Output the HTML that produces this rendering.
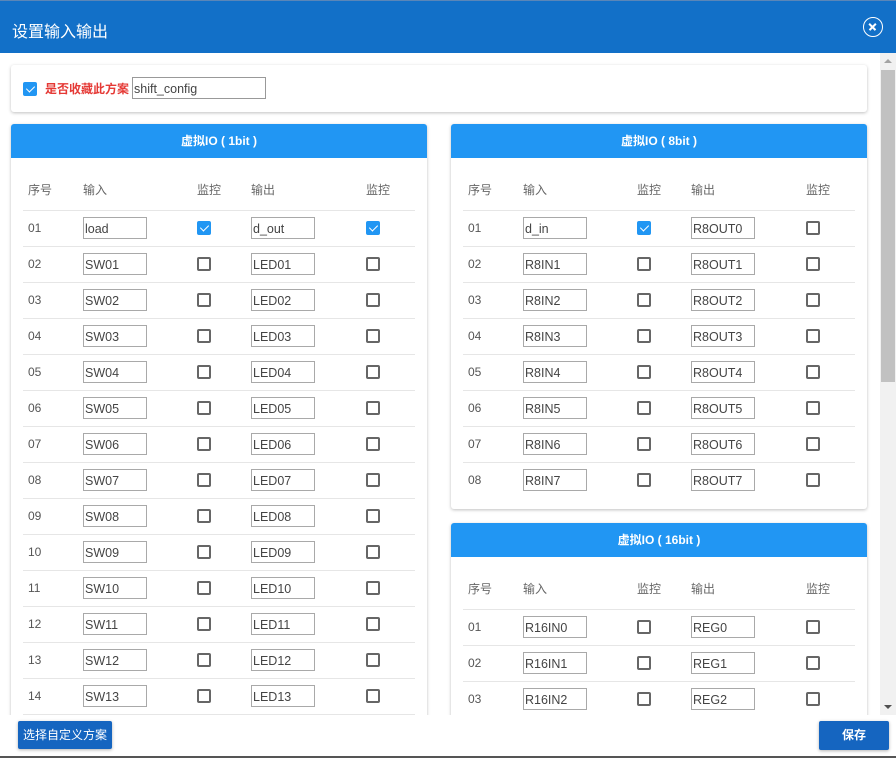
<!DOCTYPE html>
<html><head><meta charset="utf-8"><style>
*{box-sizing:border-box;margin:0;padding:0}
body{width:896px;height:758px;overflow:hidden;background:#fff;font-family:"Liberation Sans","Noto Sans CJK SC",sans-serif;position:relative;font-size:12px;color:#555}
.hd{position:absolute;left:0;top:0;width:896px;height:53px;background:#1270c8;border-top:1px solid #5a86b8}
.hd .t{position:absolute;left:12px;top:17px;color:#fff;font-size:16px}
.cl{position:absolute;left:863px;top:16px;width:20px;height:20px;border:1.5px solid #fff;border-radius:50%}
.cl:before,.cl:after{content:"";position:absolute;left:4px;top:8px;width:9px;height:1.5px;background:#fff;transform:rotate(45deg)}
.cl:after{transform:rotate(-45deg)}
.sb{position:absolute;left:880px;top:53px;width:16px;height:662px;background:#f1f1f1}
.sb .th{position:absolute;left:1px;top:17px;width:14px;height:312px;background:#c1c1c1}
.ar{position:absolute;left:4px;width:0;height:0;border-left:4px solid transparent;border-right:4px solid transparent}
.card{position:absolute;background:#fff;border-radius:3px;box-shadow:0 1px 3px rgba(0,0,0,.25)}
.cb{position:absolute;width:14px;height:14px;border:2px solid #666;border-radius:2px;background:#fff}
.cb.on{background:#2196f3;border-color:#2196f3}
.cb.on:after{content:"";position:absolute;left:3px;top:0px;width:4px;height:7px;border-right:1.5px solid #fff;border-bottom:1.5px solid #fff;transform:rotate(45deg)}
.inp{position:absolute;height:22px;width:64px;border:1px solid #a9a9a9;font-size:12.5px;color:#444;padding:4px 0 0 1px;font-family:"Liberation Sans","DejaVu Sans",sans-serif;white-space:nowrap;overflow:hidden}
.ph{position:absolute;left:0;top:0;width:416px;height:34px;background:#2196f3;color:#fff;font-weight:bold;font-size:12px;text-align:center;line-height:34px;border-radius:3px 3px 0 0}
.th2{position:absolute;top:57px;color:#666;font-size:12px}
.rows{position:absolute;left:12px;top:86px;width:392px}
.r{position:relative;height:36px;border-top:1px solid #e6e6e6}
.r .n{position:absolute;left:5px;top:10px;color:#555}
.r .i1{left:60px;top:6px}.r .i2{left:228px;top:6px}
.r .c1{left:174px;top:10px}.r .c2{left:343px;top:10px}
.btn{position:absolute;background:#1565c0;color:#fff;font-size:12px;border-radius:2px;text-align:center;box-shadow:0 1px 3px rgba(0,0,0,.3)}
</style></head><body>
<div class="hd"><div class="t">设置输入输出</div><div class="cl"></div></div>
<div class="sb"><div class="ar" style="top:6px;border-bottom:4px solid #a3a3a3"></div><div class="th"></div><div class="ar" style="top:652px;border-top:4px solid #505050"></div></div>

<div class="card" style="left:11px;top:65px;width:856px;height:47px">
<div class="cb on" style="left:12px;top:17px"></div>
<div style="position:absolute;left:34px;top:15px;color:#e53935;font-weight:bold;font-size:12px">是否收藏此方案</div>
<div class="inp" style="left:121px;top:12px;width:134px;border-color:#999">shift_config</div>
</div>

<div class="card" style="left:11px;top:124px;width:416px;height:620px">
<div class="ph">虚拟IO ( 1bit )</div>
<div class="th2" style="left:17px">序号</div><div class="th2" style="left:72px">输入</div><div class="th2" style="left:186px">监控</div><div class="th2" style="left:240px">输出</div><div class="th2" style="left:355px">监控</div>
<div class="rows">
<div class="r"><span class="n">01</span><div class="inp i1">load</div><div class="cb on c1"></div><div class="inp i2">d_out</div><div class="cb on c2"></div></div>
<div class="r"><span class="n">02</span><div class="inp i1">SW01</div><div class="cb c1"></div><div class="inp i2">LED01</div><div class="cb c2"></div></div>
<div class="r"><span class="n">03</span><div class="inp i1">SW02</div><div class="cb c1"></div><div class="inp i2">LED02</div><div class="cb c2"></div></div>
<div class="r"><span class="n">04</span><div class="inp i1">SW03</div><div class="cb c1"></div><div class="inp i2">LED03</div><div class="cb c2"></div></div>
<div class="r"><span class="n">05</span><div class="inp i1">SW04</div><div class="cb c1"></div><div class="inp i2">LED04</div><div class="cb c2"></div></div>
<div class="r"><span class="n">06</span><div class="inp i1">SW05</div><div class="cb c1"></div><div class="inp i2">LED05</div><div class="cb c2"></div></div>
<div class="r"><span class="n">07</span><div class="inp i1">SW06</div><div class="cb c1"></div><div class="inp i2">LED06</div><div class="cb c2"></div></div>
<div class="r"><span class="n">08</span><div class="inp i1">SW07</div><div class="cb c1"></div><div class="inp i2">LED07</div><div class="cb c2"></div></div>
<div class="r"><span class="n">09</span><div class="inp i1">SW08</div><div class="cb c1"></div><div class="inp i2">LED08</div><div class="cb c2"></div></div>
<div class="r"><span class="n">10</span><div class="inp i1">SW09</div><div class="cb c1"></div><div class="inp i2">LED09</div><div class="cb c2"></div></div>
<div class="r"><span class="n">11</span><div class="inp i1">SW10</div><div class="cb c1"></div><div class="inp i2">LED10</div><div class="cb c2"></div></div>
<div class="r"><span class="n">12</span><div class="inp i1">SW11</div><div class="cb c1"></div><div class="inp i2">LED11</div><div class="cb c2"></div></div>
<div class="r"><span class="n">13</span><div class="inp i1">SW12</div><div class="cb c1"></div><div class="inp i2">LED12</div><div class="cb c2"></div></div>
<div class="r"><span class="n">14</span><div class="inp i1">SW13</div><div class="cb c1"></div><div class="inp i2">LED13</div><div class="cb c2"></div></div>
<div class="r"></div>
</div></div>

<div class="card" style="left:451px;top:124px;width:416px;height:385px">
<div class="ph">虚拟IO ( 8bit )</div>
<div class="th2" style="left:17px">序号</div><div class="th2" style="left:72px">输入</div><div class="th2" style="left:186px">监控</div><div class="th2" style="left:240px">输出</div><div class="th2" style="left:355px">监控</div>
<div class="rows">
<div class="r"><span class="n">01</span><div class="inp i1">d_in</div><div class="cb on c1"></div><div class="inp i2">R8OUT0</div><div class="cb c2"></div></div>
<div class="r"><span class="n">02</span><div class="inp i1">R8IN1</div><div class="cb c1"></div><div class="inp i2">R8OUT1</div><div class="cb c2"></div></div>
<div class="r"><span class="n">03</span><div class="inp i1">R8IN2</div><div class="cb c1"></div><div class="inp i2">R8OUT2</div><div class="cb c2"></div></div>
<div class="r"><span class="n">04</span><div class="inp i1">R8IN3</div><div class="cb c1"></div><div class="inp i2">R8OUT3</div><div class="cb c2"></div></div>
<div class="r"><span class="n">05</span><div class="inp i1">R8IN4</div><div class="cb c1"></div><div class="inp i2">R8OUT4</div><div class="cb c2"></div></div>
<div class="r"><span class="n">06</span><div class="inp i1">R8IN5</div><div class="cb c1"></div><div class="inp i2">R8OUT5</div><div class="cb c2"></div></div>
<div class="r"><span class="n">07</span><div class="inp i1">R8IN6</div><div class="cb c1"></div><div class="inp i2">R8OUT6</div><div class="cb c2"></div></div>
<div class="r"><span class="n">08</span><div class="inp i1">R8IN7</div><div class="cb c1"></div><div class="inp i2">R8OUT7</div><div class="cb c2"></div></div>
</div></div>

<div class="card" style="left:451px;top:523px;width:416px;height:230px">
<div class="ph">虚拟IO ( 16bit )</div>
<div class="th2" style="left:17px">序号</div><div class="th2" style="left:72px">输入</div><div class="th2" style="left:186px">监控</div><div class="th2" style="left:240px">输出</div><div class="th2" style="left:355px">监控</div>
<div class="rows">
<div class="r"><span class="n">01</span><div class="inp i1">R16IN0</div><div class="cb c1"></div><div class="inp i2">REG0</div><div class="cb c2"></div></div>
<div class="r"><span class="n">02</span><div class="inp i1">R16IN1</div><div class="cb c1"></div><div class="inp i2">REG1</div><div class="cb c2"></div></div>
<div class="r"><span class="n">03</span><div class="inp i1">R16IN2</div><div class="cb c1"></div><div class="inp i2">REG2</div><div class="cb c2"></div></div>
</div></div>

<div style="position:absolute;left:0;top:715px;width:896px;height:43px;background:#fff;border-bottom:2px solid #555"></div>
<div class="btn" style="left:18px;top:721px;width:94px;height:28px;line-height:28px">选择自定义方案</div>
<div class="btn" style="left:819px;top:721px;width:70px;height:29px;line-height:29px;font-weight:bold">保存</div>
</body></html>
